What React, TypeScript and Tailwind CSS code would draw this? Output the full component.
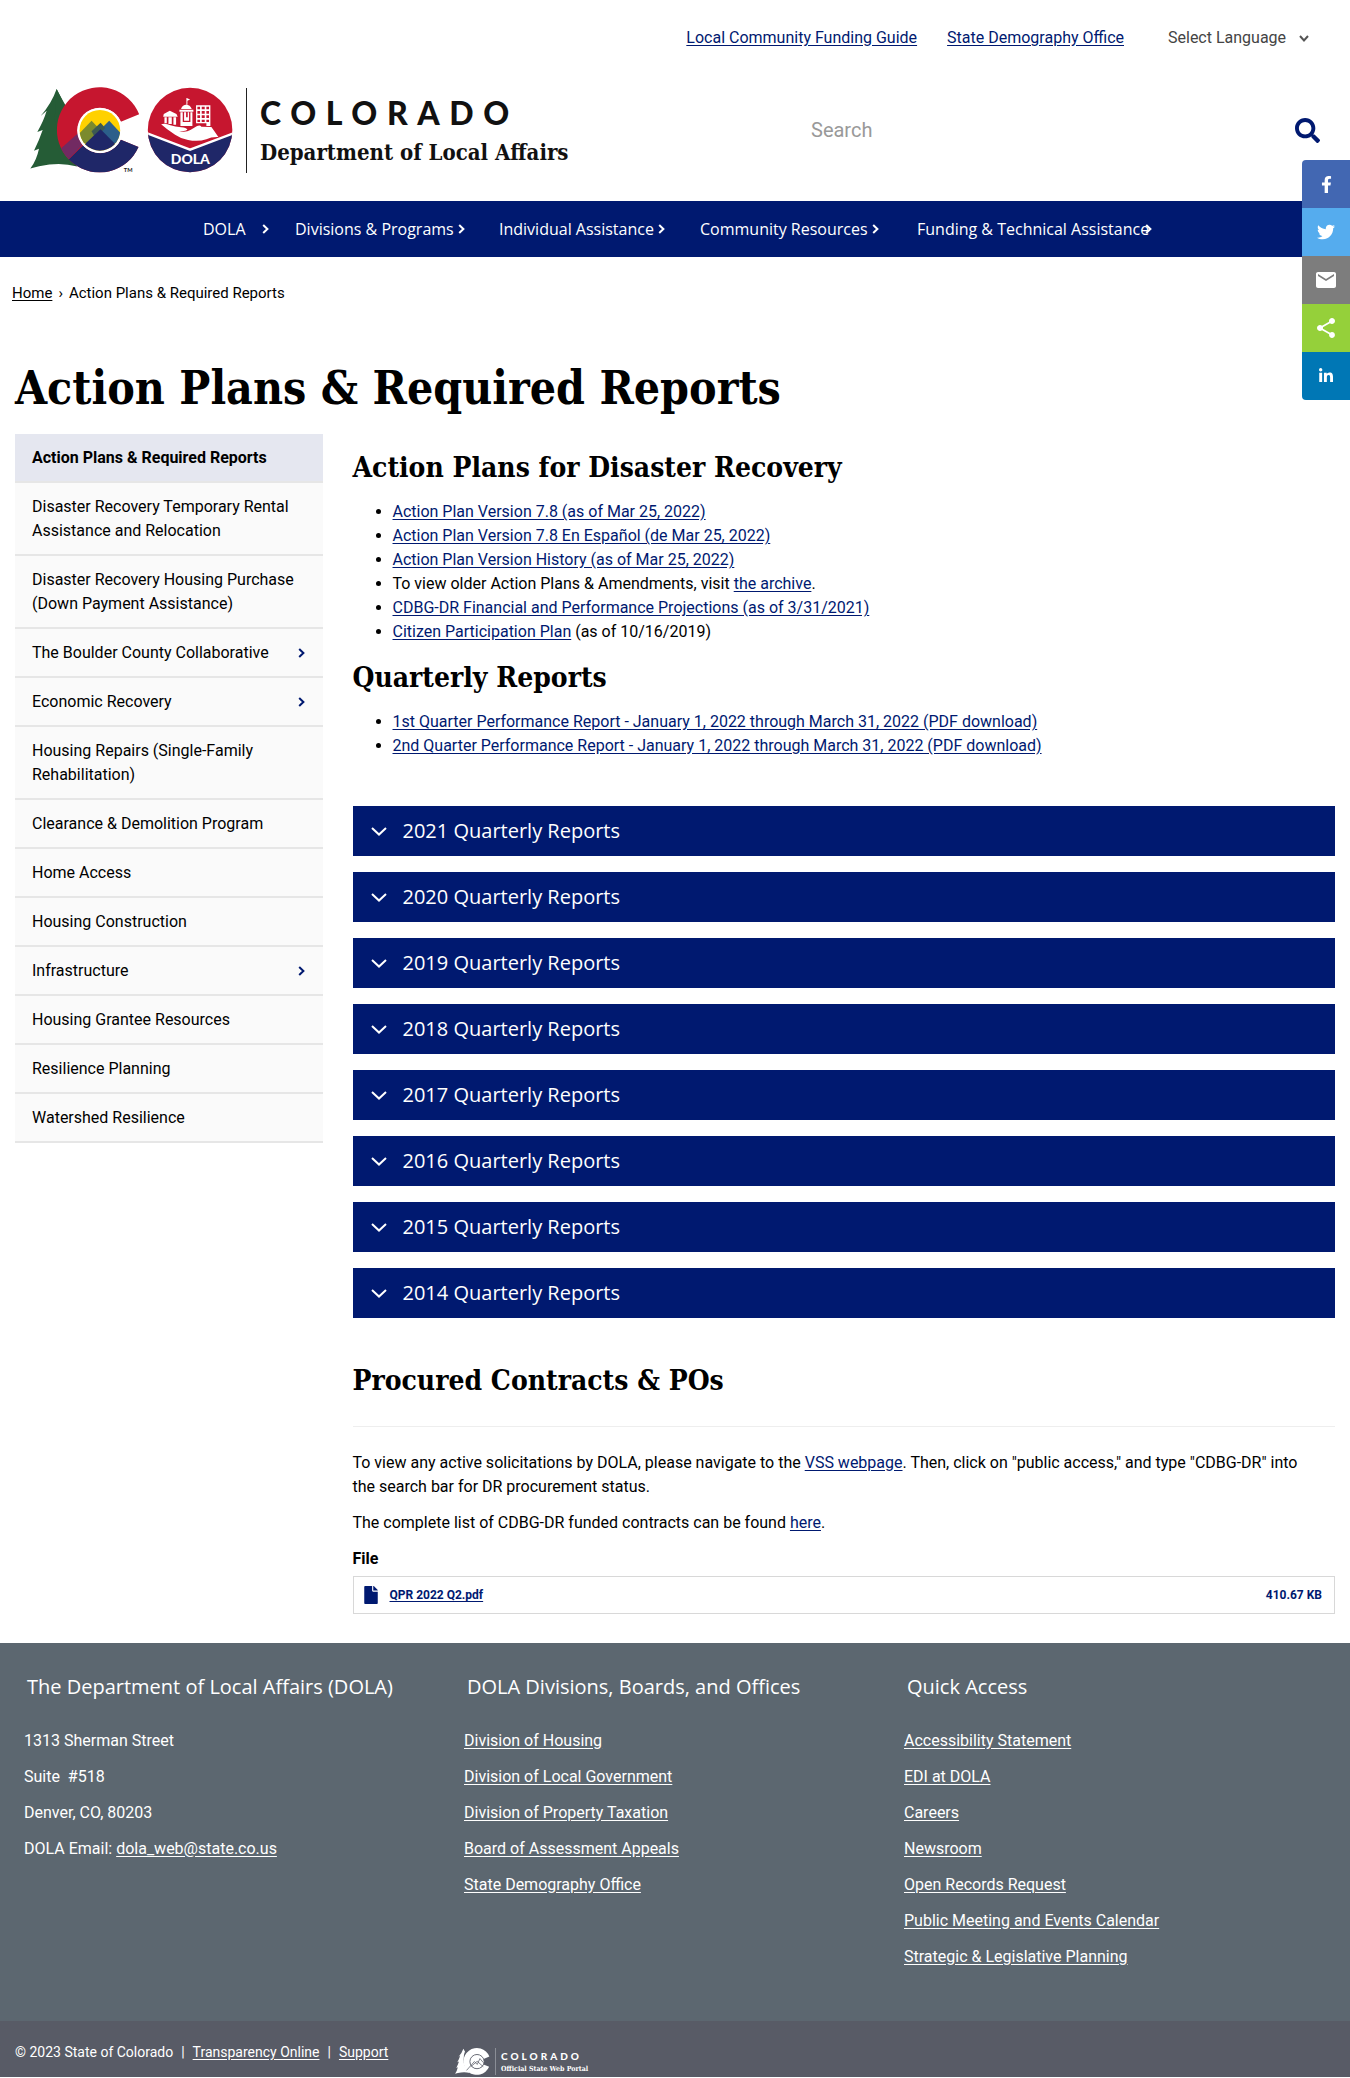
import React from "react";
import { FaFacebookF, FaFile, FaLinkedinIn, FaSearch, FaTwitter } from "react-icons/fa";
import { MdEmail, MdShare } from "react-icons/md";

const navItems = [
  { label: "DOLA", gap: "ml-[16px]" },
  { label: "Divisions & Programs", gap: "ml-1" },
  { label: "Individual Assistance", gap: "ml-1" },
  { label: "Community Resources", gap: "ml-1" },
  { label: "Funding & Technical Assistance", gap: "-ml-1" },
];

const sideItems = [
  { label: "Action Plans & Required Reports", active: true },
  { label: "Disaster Recovery Temporary Rental Assistance and Relocation" },
  { label: "Disaster Recovery Housing Purchase (Down Payment Assistance)" },
  { label: "The Boulder County Collaborative", more: true },
  { label: "Economic Recovery", more: true },
  { label: "Housing Repairs (Single-Family Rehabilitation)" },
  { label: "Clearance & Demolition Program" },
  { label: "Home Access" },
  { label: "Housing Construction" },
  { label: "Infrastructure", more: true },
  { label: "Housing Grantee Resources" },
  { label: "Resilience Planning" },
  { label: "Watershed Resilience" },
];

const years = [2021, 2020, 2019, 2018, 2017, 2016, 2015, 2014];

const divisions = [
  "Division of Housing",
  "Division of Local Government",
  "Division of Property Taxation",
  "Board of Assessment Appeals",
  "State Demography Office",
];

const quickLinks = [
  "Accessibility Statement",
  "EDI at DOLA",
  "Careers",
  "Newsroom",
  "Open Records Request",
  "Public Meeting and Events Calendar",
  "Strategic & Legislative Planning",
];

const shares = [
  { label: "Share on Facebook", bg: "bg-[#4267b2]", Icon: FaFacebookF, size: 17 },
  { label: "Share on Twitter", bg: "bg-[#55acee]", Icon: FaTwitter, size: 18 },
  { label: "Share by email", bg: "bg-[#7d7d7d]", Icon: MdEmail, size: 24 },
  { label: "Share", bg: "bg-[#95d03a]", Icon: MdShare, size: 24 },
  { label: "Share on LinkedIn", bg: "bg-[#0077b5]", Icon: FaLinkedinIn, size: 16 },
];

function ChevronRight({ className }: { className: string }) {
  return (
    <svg viewBox="0 0 7 10" className={`h-[10px] w-[7px] shrink-0 ${className}`} fill="none" stroke="currentColor" strokeWidth="2" aria-hidden="true">
      <path d="M1.2 1 L5.4 5 L1.2 9" />
    </svg>
  );
}

function A({ children }: { children: React.ReactNode }) {
  return (
    <a href="#" className="text-[#001970] underline underline-offset-2">
      {children}
    </a>
  );
}

const TREE =
  "M110 27 L128 62 L122 62 Q112 90 112 130 Q108 190 165 250 L172 260 Q130 248 88 254 Q55 258 31 266 Q50 240 57 206 L42 212 Q58 180 68 150 L52 156 Q72 120 80 92 L62 108 Q95 70 110 27 Z";
const C_SHAPE = "M358 103 A128 128 0 1 0 356 201 L303 179 A68 68 0 1 1 303 125 Z";

function StateLogo() {
  return (
    <svg viewBox="30 21 610 258" className="h-[86px] w-[203px] shrink-0" role="img" aria-label="Colorado Department of Local Affairs">
      <defs>
        <clipPath id="c-shape">
          <path d={C_SHAPE} />
        </clipPath>
        <clipPath id="c-disc">
          <circle cx="240" cy="151" r="61" />
        </clipPath>
        <clipPath id="dola-disc">
          <circle cx="511" cy="150" r="127" />
        </clipPath>
      </defs>
      <path d={TREE} fill="#255c36" />
      <path d="M110 27 Q130 66 142 84 L112 150 L104 120 Z" fill="#255c36" />
      <g clipPath="url(#c-shape)">
        <rect x="100" y="20" width="270" height="260" fill="#c6162f" />
        <path d="M140 245 L182 203 L240 150 L300 180 L370 160 V290 H100 Z" fill="#1f2768" />
        <path d="M112 215 L176 158 L186 196 L138 246 Z" fill="#722a62" />
      </g>
      <circle cx="240" cy="151" r="68" fill="#fff" />
      <g clipPath="url(#c-disc)">
        <rect x="170" y="80" width="140" height="140" fill="#ffd100" />
        <path d="M150 190 L215 122 L280 190 Z" fill="#7b8a2e" />
        <path d="M200 190 L268 122 L330 190 Z" fill="#2c5f8a" />
        <path d="M215 154 L242 128 L256 144 L226 174 Z" fill="#3c5a52" />
        <path d="M170 216 L242 148 L310 216 V230 H170 Z" fill="#1f2768" />
      </g>
      <text x="312" y="276" fontFamily="Lato, sans-serif" fontWeight="700" fontSize="17" fill="#222">TM</text>

      <g clipPath="url(#dola-disc)">
        <rect x="380" y="20" width="262" height="260" fill="#c6162f" />
        <path d="M380 160 L511 210 L642 160 V290 H380 Z" fill="#1f2768" />
        <path d="M376 158 L511 209 L646 158" fill="none" stroke="#fff" strokeWidth="7" />
      </g>
      <g fill="#fff">
        <path d="M424 133 Q436 128 452 136 Q466 141 484 142 Q500 143 503 149 Q498 154 478 153 Q498 158 512 150 L532 138 Q541 134 545 140 L575 141 Q586 156 596 171 Q575 170 560 178 Q535 186 505 180 Q485 177 466 164 Q440 148 424 133 Z" />
        <path d="M432 102 L450 92 L470 102 L474 110 H430 Z" />
        <path d="M434 112 H441 V130 H434 Z M446 112 H456 V132 H446 Z M461 112 H469 V134 H461 Z" />
        <path d="M484 87 Q486 76 498 74 Q512 74 516 87 Z M501 54 L511 58 L503 62 V74 H500 V54 Z" />
        <path d="M479 89 H521 V95 H479 Z M482 97 H489 V138 H482 Z M493 97 H499 V112 H504 V97 H508 V122 H493 Z M512 97 H518 V138 H512 Z M489 126 H512 V138 H489 Z" />
        <path fillRule="evenodd" d="M529 76 H572 V138 H560 V130 H529 Z M533 80 V88 H541 V80 Z M546 80 V88 H555 V80 Z M560 80 V88 H568 V80 Z M533 93 V101 H541 V93 Z M546 93 V101 H555 V93 Z M560 93 V101 H568 V93 Z M533 106 V114 H541 V106 Z M546 106 V114 H555 V106 Z M560 106 V114 H568 V106 Z M533 119 V126 H541 V119 Z M546 119 V126 H555 V119 Z M560 119 V126 H568 V119 Z" />
      </g>
      <text x="512" y="253" textAnchor="middle" fontFamily="Lato, sans-serif" fontWeight="900" fontSize="42" fill="#fff">DOLA</text>
    </svg>
  );
}

function PortalLogo() {
  return (
    <svg viewBox="30 21 334 258" className="h-[27px] w-[35px] shrink-0" aria-hidden="true">
      <path d={TREE} fill="#fff" />
      <path d={C_SHAPE} fill="#fff" />
      <circle cx="240" cy="151" r="68" fill="#fff" stroke="#585b66" strokeWidth="8" />
      <path d="M140 235 L215 150 L242 178 L268 122 L300 160 M180 200 L242 148 L300 200" fill="none" stroke="#585b66" strokeWidth="7" />
    </svg>
  );
}

export default function App() {
  return (
    <div className="relative w-full bg-white font-[Roboto,sans-serif] text-base leading-6 text-black">
      <header>
        <div className="flex h-[76px] items-center justify-end pr-[37px]">
          <nav aria-label="Related sites" className="flex gap-[30px]">
            <A>Local Community Funding Guide</A>
            <A>State Demography Office</A>
          </nav>
          <div className="relative ml-11 flex items-center">
            <select aria-label="Select Language" className="appearance-none bg-transparent pr-[26px] text-[#444]" defaultValue="">
              <option value="">Select Language</option>
            </select>
            <svg viewBox="0 0 10 7" className="pointer-events-none absolute right-1 h-[7px] w-[10px] text-[#555]" fill="none" stroke="currentColor" strokeWidth="2" aria-hidden="true">
              <path d="M1 1 L5 5.4 L9 1" />
            </svg>
          </div>
        </div>
        <div className="flex h-[125px] items-start justify-between pt-[11px] pr-[30px] pl-[30px]">
          <a href="#" className="flex items-center">
            <StateLogo />
            <span className="ml-[13px] h-[85px] w-px bg-[#222]" />
            <span className="ml-[13px] flex flex-col text-[#111]">
              <span className="pt-[6px] font-[Lato,sans-serif] text-[32px] leading-[30px] font-black tracking-[0.3em]">COLORADO</span>
              <span className="mt-2 font-['DejaVu_Serif_Condensed','DejaVu_Serif',serif] text-[22px] leading-[32px] font-bold">Department of Local Affairs</span>
            </span>
          </a>
          <form role="search" className="flex h-[86px] w-[509px] items-center" onSubmit={(e) => e.preventDefault()}>
            <input type="search" aria-label="Search" placeholder="Search" className="min-w-0 flex-1 text-xl text-black outline-none placeholder:text-[#999]" />
            <button type="submit" aria-label="Submit search" className="text-[#001970]">
              <FaSearch size={25} />
            </button>
          </form>
        </div>
        <nav aria-label="Main" className="bg-[#001970] text-white">
          <ul className="mx-auto grid h-14 max-w-[992px] grid-cols-[92px_204px_201px_217px_1fr] items-center px-6 font-['Open_Sans',sans-serif]">
            {navItems.map((n) => (
              <li key={n.label}>
                <a href="#" className="flex items-center whitespace-nowrap">
                  {n.label}
                  <ChevronRight className={n.gap} />
                </a>
              </li>
            ))}
          </ul>
        </nav>
      </header>

      <aside aria-label="Share" className="absolute top-[160px] right-0 flex w-12 flex-col overflow-hidden rounded-l">
        {shares.map(({ label, bg, Icon, size }) => (
          <button key={label} type="button" aria-label={label} className={`flex h-12 items-center justify-center text-white ${bg}`}>
            <Icon size={size} />
          </button>
        ))}
      </aside>

      <nav aria-label="Breadcrumb" className="px-3 pt-6 text-[15px] leading-6">
        <a href="#" className="underline underline-offset-2">Home</a>
        <span className="px-[6px]">›</span>
        <span>Action Plans &amp; Required Reports</span>
      </nav>

      <h1 className="mt-[55px] px-[15px] font-['DejaVu_Serif_Condensed','DejaVu_Serif',serif] text-[46px] leading-[56px] font-bold">Action Plans &amp; Required Reports</h1>

      <div className="mt-[18px] grid grid-cols-4 items-start">
        <nav aria-label="Section" className="px-[15px]">
          <ul>
            {sideItems.map((s) => (
              <li key={s.label} className="border-b-2 border-[#e6e6e6]">
                <a href="#" className={`flex items-center justify-between pt-3 pr-[18px] pb-[11px] pl-[17px] ${s.active ? "bg-[#e5e7f0] font-bold" : "bg-[#fafafa]"}`}>
                  <span className="max-w-[270px]">{s.label}</span>
                  {s.more && <ChevronRight className="text-[#001970]" />}
                </a>
              </li>
            ))}
          </ul>
        </nav>

        <main className="col-span-3 px-[15px] pt-[18px]">
          <h2 className="font-['DejaVu_Serif_Condensed','DejaVu_Serif',serif] text-[28px] leading-8 font-bold">Action Plans for Disaster Recovery</h2>
          <ul className="mt-4 list-disc pl-10">
            <li><A>Action Plan Version 7.8 (as of Mar 25, 2022)</A></li>
            <li><A>Action Plan Version 7.8 En Español (de Mar 25, 2022)</A></li>
            <li><A>Action Plan Version History (as of Mar 25, 2022)</A></li>
            <li>To view older Action Plans &amp; Amendments, visit <A>the archive</A>.</li>
            <li><A>CDBG-DR Financial and Performance Projections (as of 3/31/2021)</A></li>
            <li><A>Citizen Participation Plan</A> (as of 10/16/2019)</li>
          </ul>
          <h2 className="mt-[18px] font-['DejaVu_Serif_Condensed','DejaVu_Serif',serif] text-[28px] leading-8 font-bold">Quarterly Reports</h2>
          <ul className="mt-4 list-disc pl-10">
            <li><A>1st Quarter Performance Report - January 1, 2022 through March 31, 2022 (PDF download)</A></li>
            <li><A>2nd Quarter Performance Report - January 1, 2022 through March 31, 2022 (PDF download)</A></li>
          </ul>

          <div className="mt-12 flex flex-col gap-4">
            {years.map((y) => (
              <button key={y} type="button" aria-expanded="false" className="flex h-[50px] w-full items-center gap-4 bg-[#001970] pl-[18px] font-['Open_Sans',sans-serif] text-xl text-white">
                <svg viewBox="0 0 16 9" className="h-[9px] w-4" fill="none" stroke="currentColor" strokeWidth="2" aria-hidden="true">
                  <path d="M1 1 L8 7.6 L15 1" />
                </svg>
                {y} Quarterly Reports
              </button>
            ))}
          </div>

          <h2 className="mt-[47px] font-['DejaVu_Serif_Condensed','DejaVu_Serif',serif] text-[28px] leading-8 font-bold">Procured Contracts &amp; POs</h2>
          <hr className="mt-[29px] border-t border-[#eee]" />
          <p className="mt-6 pr-4">
            To view any active solicitations by DOLA, please navigate to the <A>VSS webpage</A>. Then, click on "public access," and type "CDBG-DR" into the search bar for DR procurement status.
          </p>
          <p className="mt-3">
            The complete list of CDBG-DR funded contracts can be found <A>here</A>.
          </p>
          <h3 className="mt-3 font-bold">File</h3>
          <div className="mt-[5px] flex h-[38px] items-center border border-[#d8d8d8] pr-3 pl-2 text-xs font-bold text-[#001970]">
            <FaFile className="mr-[10px]" size={18} />
            <a href="#" className="underline underline-offset-2">QPR 2022 Q2.pdf</a>
            <span className="ml-auto">410.67 KB</span>
          </div>
        </main>
      </div>

      <footer className="mt-[29px] bg-[#5c6770] text-white">
        <div className="grid grid-cols-3 px-[15px] pt-8 pb-[52px]">
          <section className="px-[9px]">
            <h2 className="px-[3px] font-['Open_Sans',sans-serif] text-xl leading-6">The Department of Local Affairs (DOLA)</h2>
            <div className="mt-[30px] flex flex-col gap-3">
              <p>1313 Sherman Street</p>
              <p>Suite&nbsp; #518</p>
              <p>Denver, CO, 80203</p>
              <p>
                DOLA Email: <a href="#" className="underline underline-offset-2">dola_web@state.co.us</a>
              </p>
            </div>
          </section>
          <section className="px-[9px]">
            <h2 className="px-[3px] font-['Open_Sans',sans-serif] text-xl leading-6">DOLA Divisions, Boards, and Offices</h2>
            <ul className="mt-[30px] flex flex-col gap-3">
              {divisions.map((d) => (
                <li key={d}><a href="#" className="underline underline-offset-2">{d}</a></li>
              ))}
            </ul>
          </section>
          <section className="px-[9px]">
            <h2 className="px-[3px] font-['Open_Sans',sans-serif] text-xl leading-6">Quick Access</h2>
            <ul className="mt-[30px] flex flex-col gap-3">
              {quickLinks.map((q) => (
                <li key={q}><a href="#" className="underline underline-offset-2">{q}</a></li>
              ))}
            </ul>
          </section>
        </div>
        <div className="grid grid-cols-3 bg-[#585b66] px-[15px] text-sm leading-6">
          <p className="flex gap-2 pt-[19px]">
            <span>© 2023 State of Colorado</span>
            <span>|</span>
            <a href="#" className="underline underline-offset-2">Transparency Online</a>
            <span>|</span>
            <a href="#" className="underline underline-offset-2">Support</a>
          </p>
          <a href="#" className="flex h-14 items-end pb-[2px]">
            <PortalLogo />
            <span className="ml-[5px] h-[27px] w-px bg-[#8b8e96]" />
            <span className="ml-[5px] flex flex-col">
              <span className="font-[Lato,sans-serif] text-[10px] leading-[14px] font-black tracking-[0.3em]">COLORADO</span>
              <span className="font-['DejaVu_Serif_Condensed','DejaVu_Serif',serif] text-[7px] leading-[12px] font-bold">Official State Web Portal</span>
            </span>
          </a>
        </div>
      </footer>
    </div>
  );
}
